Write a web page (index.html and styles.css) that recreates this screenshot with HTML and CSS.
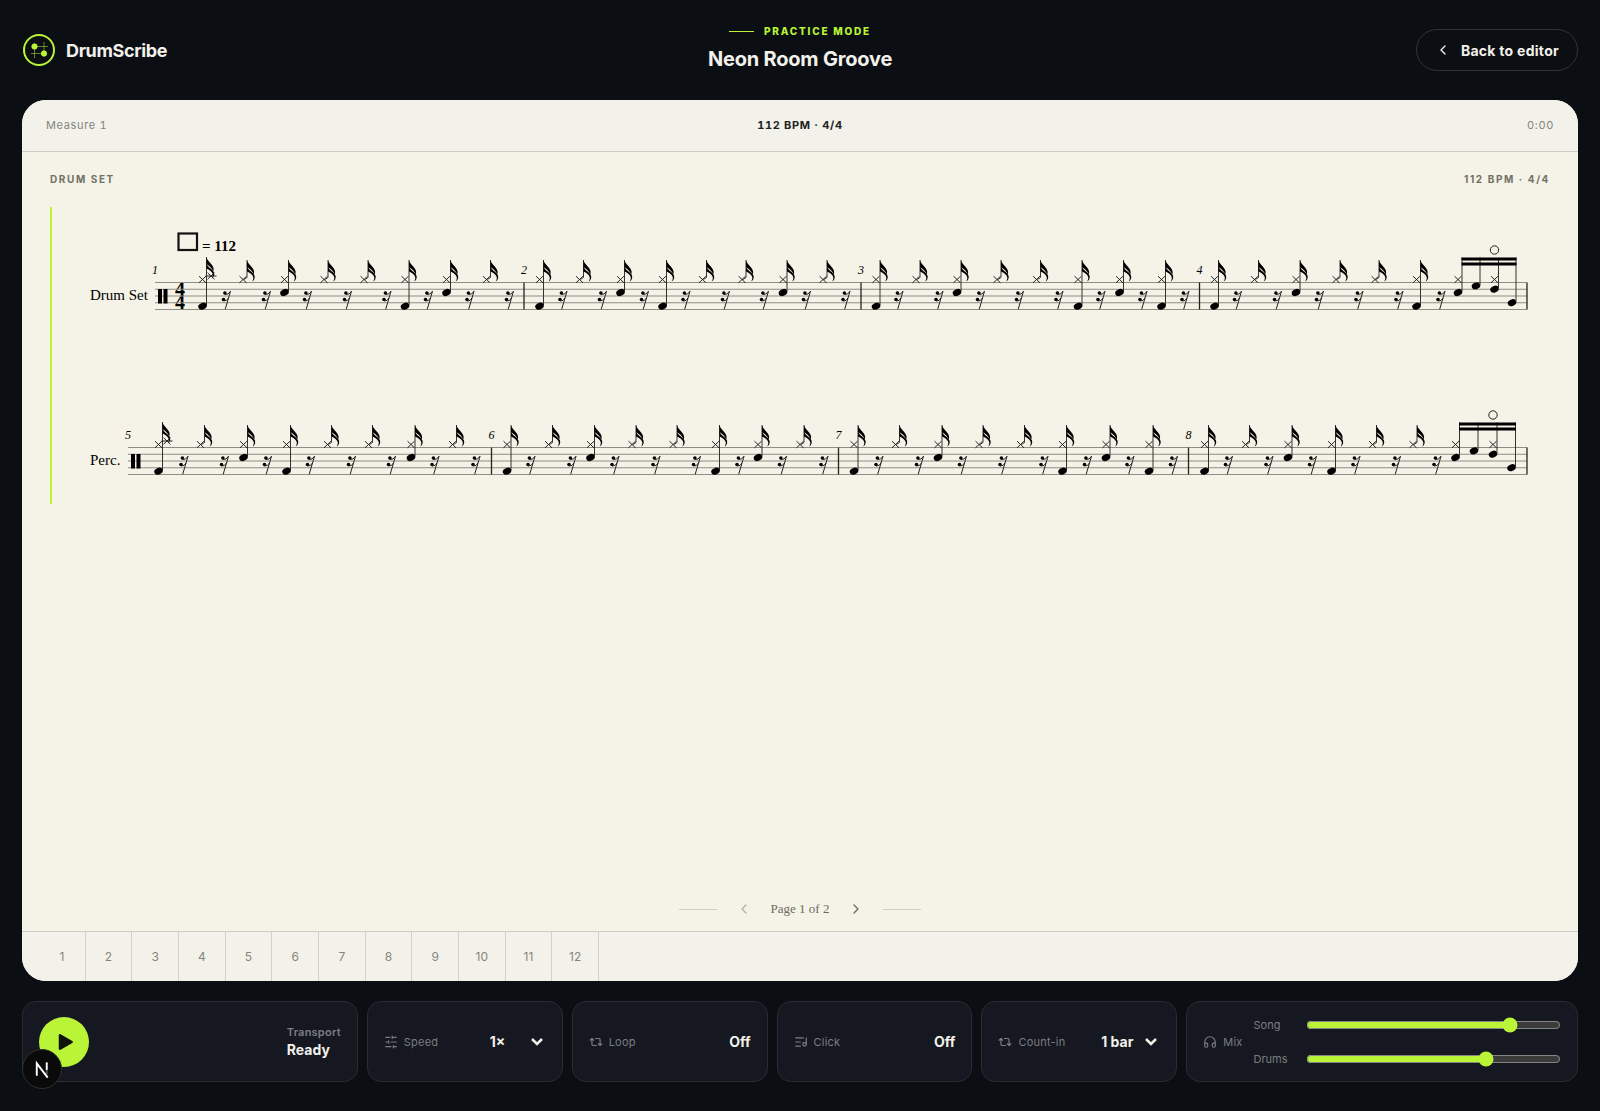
FILE: index.html
```html
<!DOCTYPE html>
<html lang="en">
<head>
    <meta charset="UTF-8">
    <meta name="viewport" content="width=device-width, initial-scale=1.0">
    <title>DrumScribe</title>
    <link rel="stylesheet" href="styles.css">
</head>
<body>
    <header class="top-header">
        <a href="#" class="brand">
            <svg class="brand-icon" viewBox="0 0 32 32" fill="none" stroke="#b9f436">
                <circle cx="16" cy="16" r="15" stroke-width="2"/>
                <path d="M8.500 12.500H25M8 19.500H23M11.500 9v15M21 8v15" stroke-opacity="0.5"/>
                <circle cx="11.500" cy="12.500" r="3" fill="#b9f436" stroke="none"/>
                <circle cx="21" cy="19.500" r="3" fill="#b9f436" stroke="none"/>
            </svg>
            <span>DrumScribe</span>
        </a>
        <div class="song">
            <p class="mode">Practice mode</p>
            <h1 class="song-title">Neon Room Groove</h1>
        </div>
        <a href="#" class="back-button">
            <svg class="icon" viewBox="0 0 24 24"><path d="m15 18-6-6 6-6"/></svg>
            Back to editor
        </a>
    </header>

    <main class="board">
        <div class="board-bar">
            <span>Measure 1</span>
            <strong>112 BPM · 4/4</strong>
            <span class="time">0:00</span>
        </div>

        <section class="sheet">
            <div class="sheet-header">
                <span>Drum set</span>
                <span>112 BPM · 4/4</span>
            </div>
            <div class="score">
                <svg id="score" viewBox="52 207 1498 297">
                    <defs>
                        <path id="cross" d="M-3.500-3.300 3.500 3.300M-3.500 3.300 3.500-3.300" stroke="#111" stroke-width="0.9"/>
                        <ellipse id="head" rx="4.400" ry="3.300" transform="rotate(-22)"/>
                        <g id="flag">
                            <path d="M0 0C.6 4 5.500 6.500 6.800 10.500C7.300 12 7.200 13.500 6.600 14.500C6 11.500 2.500 8.500 0 7Z"/>
                            <path d="M0 6.500C1 10.500 5.500 11.500 7.200 15C8.500 18 7 20.500 5.200 21.500C6.600 19 6.600 17.500 5.800 16C4.500 13.500 2 12.500 0 11.500Z"/>
                        </g>
                        <g id="rest">
                            <circle cx="-1.600" cy="-7.500" r="1.800"/>
                            <circle cx="-3" cy="-1" r="1.800"/>
                            <path d="M-1.500-6Q2-5.500 4-9.300L-1.300 8.800M-3 .5Q.5.800 2-2.500" fill="none" stroke="#222"/>
                        </g>
                    </defs>
                    <rect x="178.500" y="233.500" width="18.500" height="16.500" fill="none" stroke="#111" stroke-width="2.200"/>
                    <text class="tempo" x="202" y="251">= 112</text>
                    <text class="meter" x="175" y="296">4</text>
                    <text class="meter" x="175" y="309">4</text>
                </svg>
            </div>
            <nav class="pager">
                <span class="rule"></span>
                <button class="page-button" aria-label="Previous page" disabled>
                    <svg class="icon" viewBox="0 0 24 24"><path d="m15 18-6-6 6-6"/></svg>
                </button>
                <span>Page 1 of 2</span>
                <button class="page-button" aria-label="Next page">
                    <svg class="icon" viewBox="0 0 24 24"><path d="m9 18 6-6-6-6"/></svg>
                </button>
                <span class="rule"></span>
            </nav>
        </section>

        <div class="measures">
            <div class="measure-list">
                <button>1</button>
                <button>2</button>
                <button>3</button>
                <button>4</button>
                <button>5</button>
                <button>6</button>
                <button>7</button>
                <button>8</button>
                <button>9</button>
                <button>10</button>
                <button>11</button>
                <button>12</button>
            </div>
        </div>
    </main>

    <footer class="controls">
        <div class="card">
            <button class="play-button" aria-label="Play">
                <svg viewBox="0 0 24 24"><path d="M6 4 20 12 6 20Z" fill="#11140c" stroke="#11140c" stroke-width="3" stroke-linejoin="round"/></svg>
            </button>
            <div class="transport">
                <span>Transport</span>
                <strong>Ready</strong>
            </div>
        </div>

        <div class="card">
            <label class="card-label" for="speed">
                <svg class="icon" viewBox="0 0 24 24"><path d="M21 4h-7M10 4H3M21 12h-9M8 12H3M21 20h-5M12 20H3M14 2v4M8 10v4M16 18v4"/></svg>
                Speed
            </label>
            <span class="select">
                <select id="speed">
                    <option>1×</option>
                </select>
                <svg class="arrow" viewBox="0 0 12 8"><path d="m1 1 5 5 5-5"/></svg>
            </span>
        </div>

        <button class="card">
            <span class="card-label">
                <svg class="icon" viewBox="0 0 24 24"><path d="m2 9 3-3 3 3M13 18H7a2 2 0 0 1-2-2V6M22 15l-3 3-3-3M11 6h6a2 2 0 0 1 2 2v10"/></svg>
                Loop
            </span>
            <strong>Off</strong>
        </button>

        <button class="card">
            <span class="card-label">
                <svg class="icon" viewBox="0 0 24 24"><path d="M16 5H3M11 12H3M11 19H3M21 16V5"/><circle cx="18" cy="16" r="3"/></svg>
                Click
            </span>
            <strong>Off</strong>
        </button>

        <div class="card">
            <label class="card-label" for="count-in">
                <svg class="icon" viewBox="0 0 24 24"><path d="m2 9 3-3 3 3M13 18H7a2 2 0 0 1-2-2V6M22 15l-3 3-3-3M11 6h6a2 2 0 0 1 2 2v10"/></svg>
                Count-in
            </label>
            <span class="select">
                <select id="count-in">
                    <option>1 bar</option>
                </select>
                <svg class="arrow" viewBox="0 0 12 8"><path d="m1 1 5 5 5-5"/></svg>
            </span>
        </div>

        <div class="card mix">
            <span class="card-label">
                <svg class="icon" viewBox="0 0 24 24"><path d="M3 14h3a2 2 0 0 1 2 2v3a2 2 0 0 1-2 2H5a2 2 0 0 1-2-2v-7a9 9 0 0 1 18 0v7a2 2 0 0 1-2 2h-1a2 2 0 0 1-2-2v-3a2 2 0 0 1 2-2h3"/></svg>
                Mix
            </span>
            <div class="sliders">
                <label for="song">Song</label>
                <input type="range" id="song" min="0" max="100" value="82">
                <label for="drums">Drums</label>
                <input type="range" id="drums" min="0" max="100" value="72">
            </div>
        </div>
    </footer>

    <button class="dev-badge" aria-label="Open dev tools">
        <svg viewBox="0 0 40 40" fill="none" stroke-width="2">
            <path d="M14.500 27V14L26 29" stroke="#fff"/>
            <path d="M25 13v8" stroke="#fff"/>
            <path d="M25 21v5" stroke="#fff" stroke-opacity="0.3"/>
        </svg>
    </button>

    <script src="score.js"></script>
</body>
</html>
```
FILE: styles.css
```css
* {
    box-sizing: border-box;
}

body {
    margin: 0;
    min-height: 100vh;
    padding: 0 22px 29px;
    display: flex;
    flex-direction: column;
    background-color: #0b0e13;
    color: #f2f1ea;
    font-family: Inter, sans-serif;
    font-size: 14px;
}

button {
    font-family: inherit;
    cursor: pointer;
}

.icon {
    width: 16px;
    height: 16px;
    fill: none;
    stroke: currentColor;
    stroke-width: 2;
    stroke-linecap: round;
    stroke-linejoin: round;
}

/* header ========================================================== */

.top-header {
    height: 100px;
    display: grid;
    grid-template-columns: 1fr auto 1fr;
    align-items: center;
}

.brand {
    display: flex;
    align-items: center;
    gap: 11px;
    color: inherit;
    font-size: 18px;
    font-weight: 700;
    letter-spacing: -0.02em;
    text-decoration: none;
}

.brand-icon {
    width: 32px;
    height: 32px;
    margin-left: 1px;
}

.song {
    padding-bottom: 4px;
    text-align: center;
}

.mode {
    display: flex;
    align-items: center;
    justify-content: center;
    gap: 10px;
    margin: 0 0 8px;
    color: #b9f436;
    font-size: 10px;
    line-height: 14px;
    font-weight: 800;
    letter-spacing: 0.18em;
    text-transform: uppercase;
}

.mode::before {
    content: "";
    width: 25px;
    height: 1px;
    background-color: #b9f436;
}

.song-title {
    margin: 0;
    font-size: 20px;
    line-height: 26px;
    font-weight: 700;
    letter-spacing: -0.01em;
}

.back-button {
    justify-self: end;
    display: flex;
    align-items: center;
    gap: 10px;
    height: 42px;
    padding: 0 18px;
    border: 1px solid #303338;
    border-radius: 21px;
    color: inherit;
    font-size: 14px;
    font-weight: 700;
    letter-spacing: 0.02em;
    text-decoration: none;
}

/* board =========================================================== */

.board {
    flex: 1;
    display: flex;
    flex-direction: column;
    overflow: hidden;
    border-radius: 24px;
    background-color: #f5f3e7;
    color: #111;
}

.board-bar {
    display: grid;
    grid-template-columns: 1fr auto 1fr;
    align-items: center;
    height: 52px;
    padding: 0 24px 2px;
    border-bottom: 1px solid #cfcec4;
    background-color: #f2f2ea;
    color: #85857f;
    font-size: 11px;
    font-variant-numeric: tabular-nums;
    letter-spacing: 0.06em;
}

.board-bar strong {
    color: #22221f;
    font-weight: 700;
}

.time {
    text-align: right;
}

.sheet {
    flex: 1;
    display: flex;
    flex-direction: column;
    padding: 20px 28px 6px;
}

.sheet-header {
    display: flex;
    justify-content: space-between;
    margin-bottom: 20px;
    color: #716f66;
    font-size: 10px;
    line-height: 15px;
    font-weight: 700;
    letter-spacing: 0.16em;
    text-transform: uppercase;
}

.score {
    border-left: 2px solid #b9f436;
}

.score svg {
    display: block;
    width: 100%;
}

.score text {
    font-family: "Liberation Serif", serif;
    font-size: 15px;
}

.score .tempo {
    font-weight: bold;
}

.score .meter {
    font-size: 20px;
    font-weight: bold;
}

.score .number {
    font-size: 12px;
    font-style: italic;
}

.pager {
    display: flex;
    align-items: center;
    justify-content: center;
    gap: 19px;
    margin-top: auto;
    color: #6d6b62;
    font-family: Georgia, "Liberation Serif", serif;
    font-size: 13px;
}

.rule {
    width: 38px;
    height: 1px;
    background-color: #cfcdc1;
}

.page-button {
    display: flex;
    padding: 8px 0;
    border: 0;
    background: none;
    color: #6d6b62;
}

.page-button:disabled {
    color: #b3b1a6;
}

.measures {
    height: 50px;
    padding-left: 17px;
    border-top: 1px solid #cfcec4;
    background-color: #f2f2ea;
}

.measure-list {
    display: grid;
    grid-template-columns: repeat(12, 1fr);
    width: 560px;
    height: 100%;
}

.measure-list button {
    padding: 0;
    border: 0;
    border-right: 1px solid #d3d2c9;
    background: none;
    color: #85857f;
    font-size: 12px;
}

/* controls ======================================================== */

.controls {
    display: grid;
    grid-template-columns: 12fr 7fr 7fr 7fr 7fr 14fr;
    gap: 9px;
    margin-top: 20px;
}

.card {
    display: flex;
    align-items: center;
    justify-content: space-between;
    height: 81px;
    padding: 0 16px;
    border: 1px solid #2a2c31;
    border-radius: 14px;
    background-color: #151820;
    color: inherit;
    font-size: 14px;
}

.play-button {
    display: flex;
    align-items: center;
    justify-content: center;
    width: 50px;
    height: 50px;
    padding: 0;
    border: 0;
    border-radius: 50%;
    background-color: #b9f436;
}

.play-button svg {
    width: 20px;
    height: 20px;
    margin-left: 2px;
}

.transport {
    display: flex;
    flex-direction: column;
    gap: 2px;
    padding-bottom: 2px;
    line-height: 16px;
}

.transport span {
    color: #7b7d81;
    font-size: 11px;
    font-weight: 600;
    letter-spacing: 0.02em;
}

.card-label {
    display: flex;
    align-items: center;
    gap: 6px;
    color: #7b7d81;
    font-size: 11px;
    letter-spacing: 0.02em;
}

.card-label .icon {
    width: 14px;
    height: 14px;
}

.select {
    position: relative;
    display: flex;
    align-items: center;
}

.select select {
    appearance: none;
    padding: 4px 40px 4px 0;
    border: 0;
    background: none;
    color: inherit;
    font-family: inherit;
    font-size: 14px;
    font-weight: 700;
}

#count-in {
    padding-right: 26px;
}

.arrow {
    position: absolute;
    right: 3px;
    width: 12px;
    height: 8px;
    fill: none;
    stroke: currentColor;
    stroke-width: 2.5;
    pointer-events: none;
}

.mix {
    justify-content: flex-start;
    gap: 11px;
}

.sliders {
    flex: 1;
    display: grid;
    grid-template-columns: 52px 1fr;
    align-items: center;
    row-gap: 18px;
    color: #7b7d81;
    font-size: 11px;
}

.sliders input {
    width: 100%;
    height: 16px;
    margin: 0;
    accent-color: #b9f436;
    color-scheme: dark;
}

.dev-badge {
    position: fixed;
    left: 22px;
    bottom: 22px;
    width: 40px;
    height: 40px;
    padding: 0;
    border: 1px solid #30312f;
    border-radius: 50%;
    background-color: #090a09;
}

.dev-badge svg {
    display: block;
    width: 100%;
}
```
FILE: score.js
```js
const score = document.getElementById('score');

// x positions of every hit; y values are relative to the top staff line
const systems = [
    {
        y: 282.5, x: 155, label: 'Drum Set', labelX: 90,
        bars: [155, 524, 861, 1199.5, 1527],
        hats: [202.5, 243, 284.5, 324, 364, 405, 446.5, 486.5,
               539.5, 579.5, 620.5, 662.5, 702.5, 742, 783, 823,
               876, 916, 957, 997, 1036.5, 1078, 1119.5, 1161.5,
               1214.5, 1254.5, 1296, 1336, 1375, 1416.5],
        kicks: [202.5, 405, 539.5, 662.5, 876, 1078, 1161.5, 1214.5, 1416.5],
        snares: [284.5, 446.5, 620.5, 783, 957, 1119.5, 1296],
        rests: [226.5, 266.5, 307.5, 347.5, 387, 428.5, 470, 509.5,
                563, 602.5, 644.5, 686, 725.5, 764.5, 806.5, 846,
                899, 939, 980.5, 1019.5, 1059, 1101, 1143, 1185,
                1237.5, 1277.5, 1319.5, 1359, 1399, 1441],
        fill: [1458, 1476, 1494.5, 1512],
        firstNumber: 1
    },
    {
        y: 447.5, x: 128, label: 'Perc.', labelX: 90,
        bars: [128, 491.5, 838.5, 1188.5, 1527],
        hats: [158.5, 200.5, 243.5, 286.5, 327.5, 368.5, 411, 452.5,
               507, 548.5, 590.5, 632, 673, 715.5, 758, 800,
               854, 895.5, 938, 979, 1020.5, 1062.5, 1106, 1149,
               1204.5, 1245.5, 1288, 1331.5, 1372.5, 1413],
        kicks: [158.5, 286.5, 507, 715.5, 854, 1062.5, 1149, 1204.5, 1331.5],
        snares: [243.5, 411, 590.5, 758, 938, 1106, 1288],
        rests: [184, 224.5, 267.5, 310.5, 351.5, 391.5, 435, 476,
                531, 572, 615, 656, 696.5, 740, 782.5, 824,
                879, 919.5, 962.5, 1003, 1044, 1087.5, 1130, 1173.5,
                1228.5, 1269, 1312.5, 1356, 1396.5, 1437],
        fill: [1455.5, 1474, 1493, 1511.5],
        firstNumber: 5
    }
];

function add(name, attrs, text) {
    const el = document.createElementNS('http://www.w3.org/2000/svg', name);
    for (const key in attrs) {
        el.setAttribute(key, attrs[key]);
    }
    if (text) {
        el.textContent = text;
    }
    score.appendChild(el);
}

function use(id, x, y) {
    add('use', { href: '#' + id, x: x, y: y });
}

function line(x1, y1, x2, y2, color, width) {
    add('line', { x1, y1, x2, y2, stroke: color || '#222', 'stroke-width': width || 1 });
}

systems.forEach(function (s) {
    const y = s.y;

    // staff
    for (let i = 0; i < 5; i++) {
        line(s.x, y + i * 6.75, 1527, y + i * 6.75, '#8f8d84');
    }
    s.bars.slice(1).forEach(x => line(x, y, x, y + 27, '#222', 1.3));
    s.bars.slice(0, 4).forEach((x, i) => {
        add('text', { class: 'number', x: x - 3, y: y - 9 }, String(s.firstNumber + i));
    });
    add('text', { x: s.labelX, y: y + 17 }, s.label);
    add('rect', { x: s.x + 3, y: y + 6.5, width: 4, height: 14.5 });
    add('rect', { x: s.x + 8.5, y: y + 6.5, width: 4, height: 14.5 });

    s.hats.forEach((x, i) => {
        const top = i === 0 ? y - 25.5 : y - 22.5;
        let bottom = y - 5;
        if (s.kicks.includes(x)) {
            bottom = y + 23;
        } else if (s.snares.includes(x)) {
            bottom = y + 9;
        } else {
            // short stem curls into the cross
            line(x + 4, bottom, x + 1, y - 3, '#333');
        }
        use('cross', x, y - 3);
        line(x + 4, top, x + 4, bottom, '#333');
        use('flag', x + 4, top);
    });

    // crash on the downbeat
    use('cross', s.hats[0] + 8.5, y - 6.5);
    line(s.hats[0] + 3, y - 6.5, s.hats[0] + 14, y - 6.5);

    s.kicks.forEach(x => use('head', x, y + 23.7));
    s.snares.forEach(x => use('head', x, y + 10));
    s.rests.forEach(x => use('rest', x, y + 18));

    // beamed fill
    const heads = [10, 3.4, 6.7, 20.2];
    s.fill.forEach((x, i) => {
        use('head', x, y + heads[i]);
        line(x + 4, y - 25, x + 4, y + heads[i] - 1, '#333');
    });
    use('cross', s.fill[0], y - 3);
    use('cross', s.fill[2], y - 3);
    const left = s.fill[0] + 3.5;
    const width = s.fill[3] + 4.5 - left;
    add('rect', { x: left, y: y - 25, width: width, height: 3 });
    add('rect', { x: left, y: y - 20, width: width, height: 3 });
    add('circle', { cx: s.fill[2], cy: y - 32.5, r: 4.2, fill: 'none', stroke: '#222' });
});
```
